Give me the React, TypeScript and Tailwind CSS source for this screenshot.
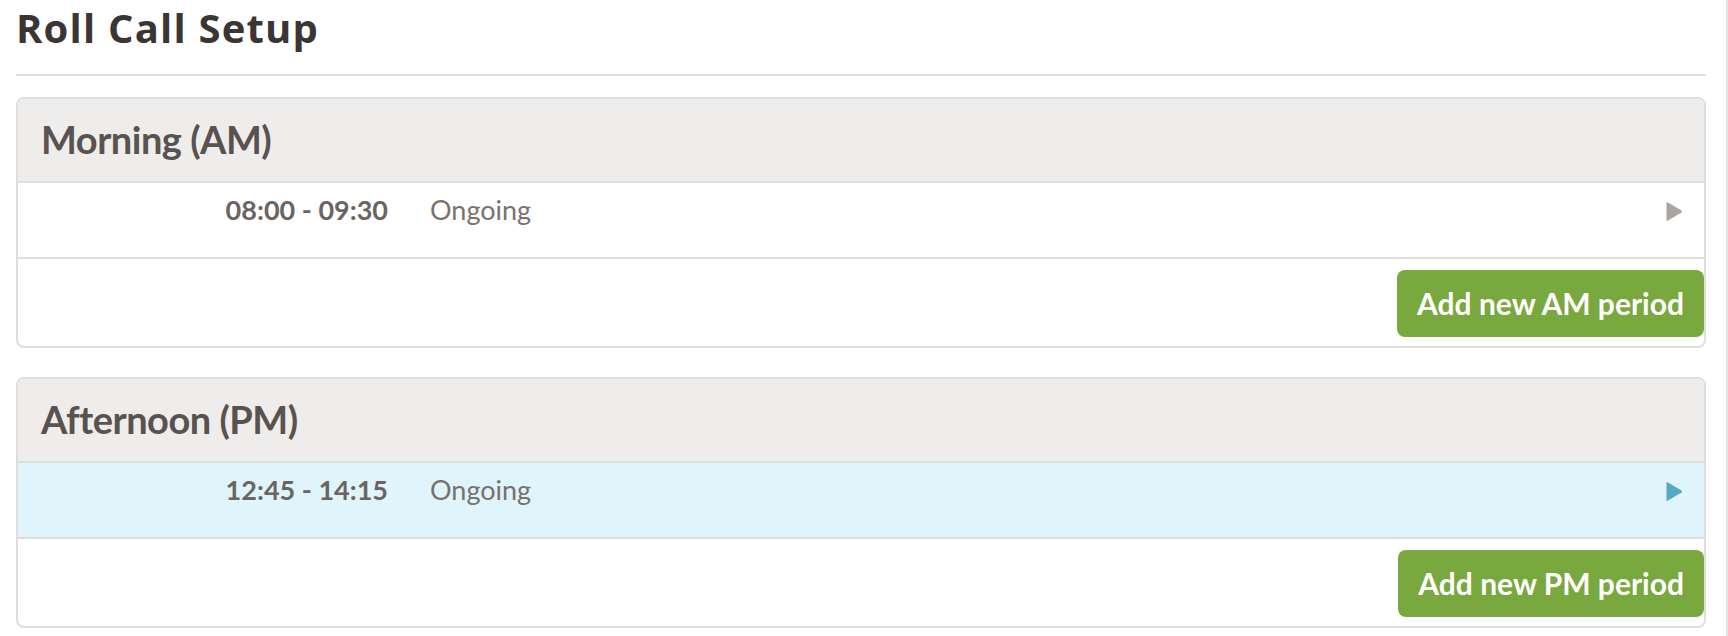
const font = { fontFamily: "Lato, 'Noto Sans', sans-serif" };

type Period = {
  time: string;
  status: string;
  active?: boolean;
};

type Section = {
  title: string;
  periods: Period[];
  button: string;
};

const sections: Section[] = [
  {
    title: "Morning (AM)",
    periods: [{ time: "08:00 - 09:30", status: "Ongoing" }],
    button: "Add new AM period",
  },
  {
    title: "Afternoon (PM)",
    periods: [{ time: "12:45 - 14:15", status: "Ongoing", active: true }],
    button: "Add new PM period",
  },
];

function Arrow({ active }: { active?: boolean }) {
  return (
    <svg width="17" height="21" viewBox="0 0 17 21" className="shrink-0">
      <path
        d="M1.5 1.2 L15.6 9.6 Q16.4 10.5 15.6 11.4 L1.5 19.8 Q0.5 20.2 0.5 19 L0.5 2 Q0.5 0.8 1.5 1.2 Z"
        fill={active ? "#55a9c2" : "#aaa5a2"}
      />
    </svg>
  );
}

function PeriodRow({ period }: { period: Period }) {
  return (
    <div
      className={`flex items-start h-[76px] border-b-2 border-[#dedede] pt-[8px] pr-[21px] ${
        period.active ? "bg-[#dff5fb]" : "bg-white"
      }`}
    >
      <div className="w-[370px] text-right text-[27px] leading-[38px] font-bold text-[#6b6461]">
        {period.time}
      </div>
      <div className="flex-1 pl-[42px] text-[27px] leading-[38px] text-[#78716e]">
        {period.status}
      </div>
      <div className="pt-[10px]">
        <Arrow active={period.active} />
      </div>
    </div>
  );
}

function SectionCard({ section }: { section: Section }) {
  return (
    <div className="border-2 border-[#dedede] rounded-[8px] overflow-hidden">
      <div className="h-[84px] bg-[#eeedeb] border-b-2 border-[#dedede] pl-[23px] pt-[16px]">
        <h2 className="text-[38px] leading-[48px] font-bold tracking-[-0.5px] text-[#59524f]">
          {section.title}
        </h2>
      </div>
      {section.periods.map((p, i) => (
        <PeriodRow key={i} period={p} />
      ))}
      <div className="flex justify-end pt-[11px] pb-[9px]">
        <button className="h-[67px] px-[20px] rounded-[8px] bg-[#78a83e] text-white text-[30px] font-bold">
          {section.button}
        </button>
      </div>
    </div>
  );
}

export default function App() {
  return (
    <div className="w-[1728px] h-[636px] bg-white overflow-hidden" style={font}>
      <div className="h-full border-r-2 border-[#e2e2e2] pl-[16px] pr-[20px] pt-[4px]">
        <h1 className="text-[40px] leading-[48px] font-bold tracking-[1.2px] text-[#3b3533] font-['Open_Sans',sans-serif]">
          Roll Call Setup
        </h1>
        <div className="mt-[22px] border-t-2 border-[#dedede]" />
        <div className="flex flex-col gap-[29px] mt-[21px]">
          {sections.map((s, i) => (
            <SectionCard key={i} section={s} />
          ))}
        </div>
      </div>
    </div>
  );
}
